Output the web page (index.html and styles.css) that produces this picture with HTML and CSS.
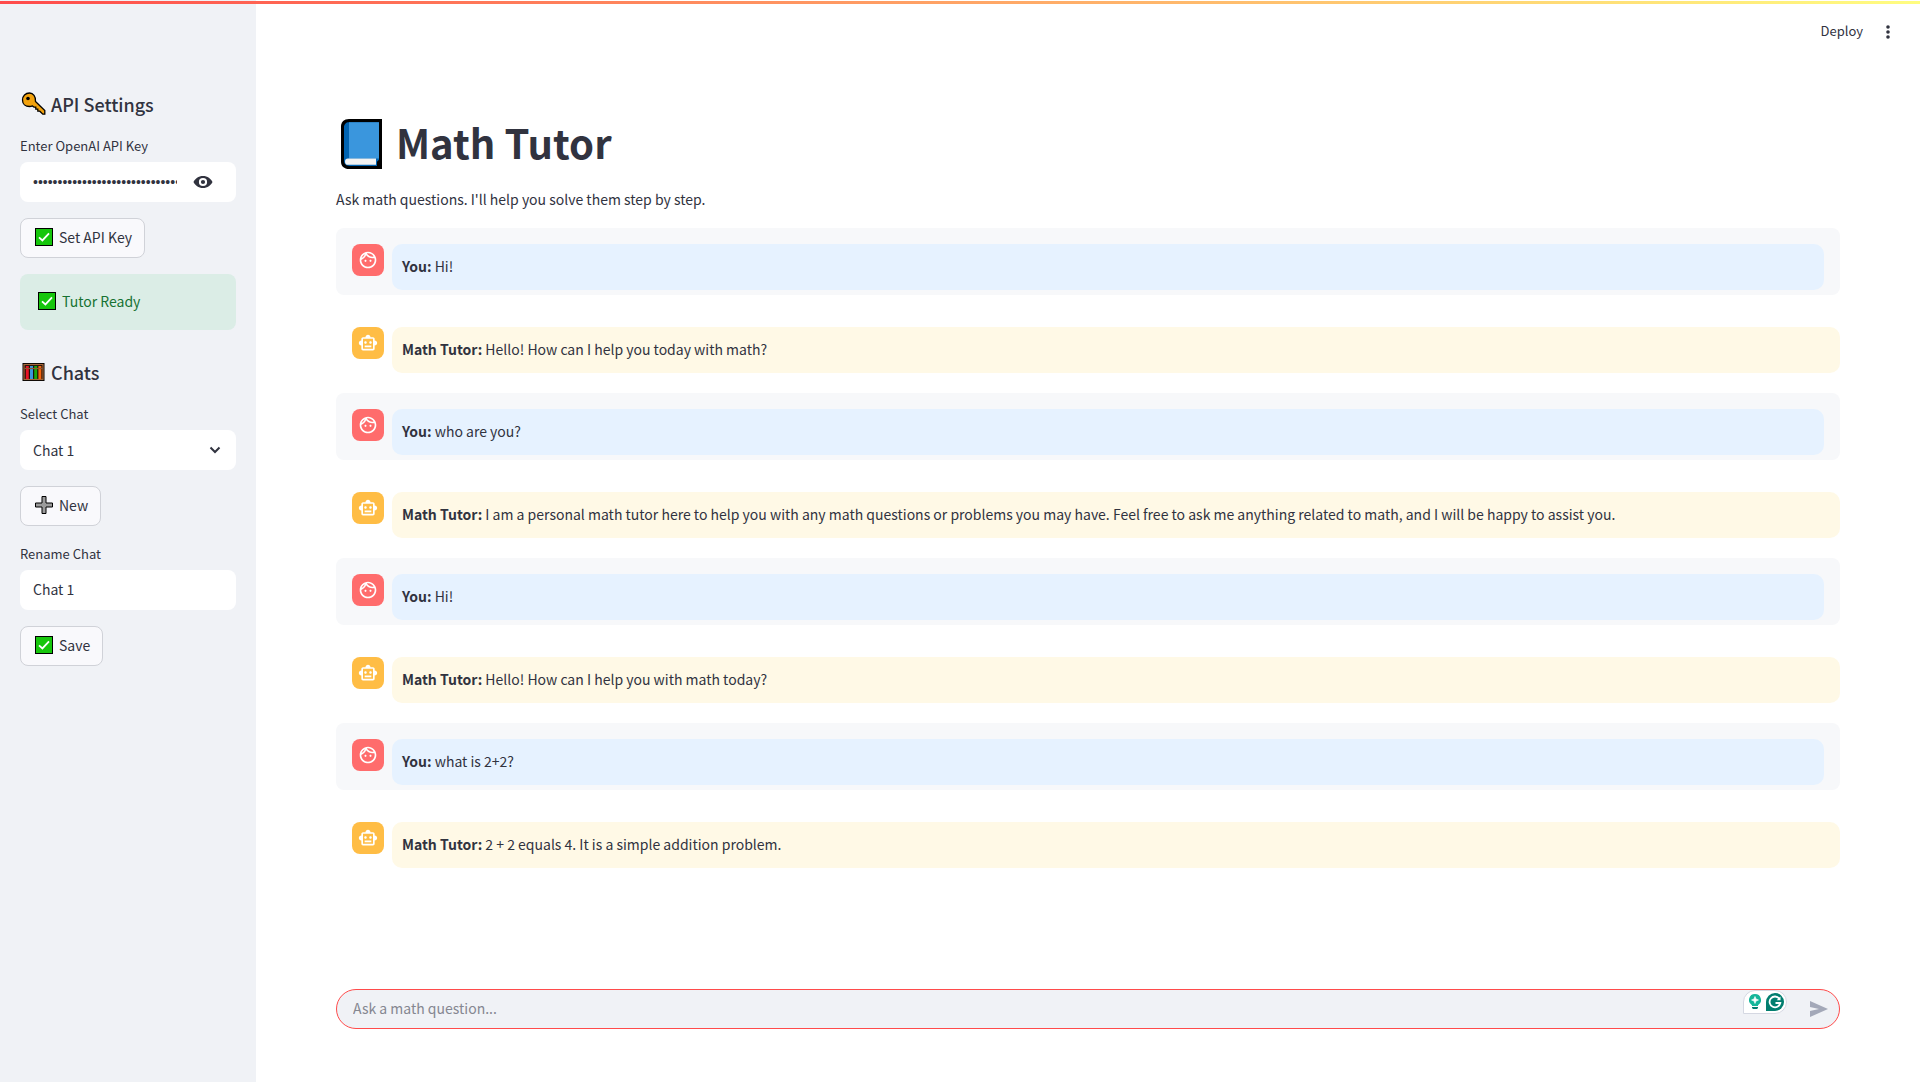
FILE: index.html
```html
<!DOCTYPE html>
<html lang="en">
<head>
<meta charset="utf-8">
<title>Math Tutor</title>
<meta name="viewport" content="width=device-width, initial-scale=1">
<link rel="stylesheet" href="styles.css">
</head>
<body>
<svg class="sprite" aria-hidden="true">
  <symbol id="check" viewBox="0 0 18 18"><rect x="0.5" y="0.5" width="17" height="17" fill="#16c60c" stroke="#000"/><path d="M4 9.400 7.400 12.400 14 5.400" fill="none" stroke="#fff" stroke-width="1.800"/></symbol>
  <symbol id="face" viewBox="0 0 24 24"><path d="M10.250 13c0 .69-.56 1.250-1.250 1.250S7.750 13.690 7.750 13s.56-1.250 1.250-1.250 1.250.56 1.250 1.250zM15 11.750c-.69 0-1.250.56-1.250 1.250s.56 1.250 1.250 1.250 1.250-.56 1.250-1.250-.56-1.250-1.250-1.250zm7 .25c0 5.520-4.480 10-10 10S2 17.520 2 12 6.480 2 12 2s10 4.480 10 10zM10.660 4.120C12.060 6.440 14.600 8 17.500 8c.46 0 .91-.05 1.340-.12C17.440 5.560 14.900 4 12 4c-.46 0-.91.05-1.340.12zM4.420 9.470c1.710-.97 3.030-2.550 3.660-4.440C6.370 6 5.050 7.580 4.420 9.470zM20 12c0-.78-.12-1.530-.33-2.240-.7.150-1.420.24-2.170.24-3.130 0-5.920-1.440-7.760-3.690C8.690 8.870 6.600 10.880 4 11.860c.01.04 0 .09 0 .14 0 4.410 3.590 8 8 8s8-3.590 8-8z" fill="#fff"/></symbol>
  <symbol id="robot" viewBox="0 0 24 24"><path d="M20 9V7c0-1.100-.9-2-2-2h-3c0-1.660-1.340-3-3-3S9 3.340 9 5H6c-1.100 0-2 .9-2 2v2c-1.660 0-3 1.340-3 3s1.340 3 3 3v4c0 1.100.9 2 2 2h12c1.100 0 2-.9 2-2v-4c1.660 0 3-1.340 3-3s-1.340-3-3-3zm-2 10H6V7h12v12zm-9-6c-.83 0-1.500-.67-1.500-1.500S8.170 10 9 10s1.500.67 1.500 1.500S9.830 13 9 13zm7.500-1.500c0 .83-.67 1.500-1.500 1.500s-1.500-.67-1.500-1.500.67-1.500 1.500-1.500 1.500.67 1.500 1.500zM8 15h8v2H8v-2z" fill="#fff"/></symbol>
</svg>
<div class="app">
  <aside class="sidebar">
    <h2 class="side-title">
      <svg class="side-emoji" viewBox="0 0 24 24" aria-hidden="true"><path d="M8 1C4 1 1 4 1 8s3 6.500 7 6.500c1 0 2-.2 3-.6l1.500 1.300h1.800v2h2v2h2l3 3h2v-3.700L14 9.500c.4-5-2.300-8.500-6-8.500z" fill="#f2a20d" stroke="#000" stroke-width="1.300"/><circle cx="6.500" cy="6.500" r="1.800"/></svg>
      <span>API Settings</span>
    </h2>
    <label class="field-label" for="api-key">Enter OpenAI API Key</label>
    <div class="field">
      <input class="field-input masked" id="api-key" type="password" value="sk-0000000000000000000000000000000000000000">
      <button class="reveal" type="button" aria-label="Show password text"><svg class="icon-20" viewBox="0 0 20 20" aria-hidden="true"><path fill-rule="evenodd" d="M10 4C5.500 4 2 6.700.5 10 2 13.300 5.500 16 10 16s8-2.700 9.500-6C18 6.700 14.500 4 10 4zm0 1.900a4.100 4.100 0 1 1 0 8.200 4.100 4.100 0 0 1 0-8.200zm0 2a2.100 2.100 0 1 0 0 4.200 2.100 2.100 0 0 0 0-4.200z" fill="#31333f"/></svg></button>
    </div>
    <button class="btn" type="button"><svg class="emoji" aria-hidden="true"><use href="#check"/></svg>Set API Key</button>
    <div class="alert" role="status"><svg class="emoji" aria-hidden="true"><use href="#check"/></svg>Tutor Ready</div>
    <h2 class="side-title">
      <svg class="side-emoji" viewBox="0 0 24 24" aria-hidden="true"><rect x="1" y="3" width="22" height="18"/><rect x="2.500" y="4.500" width="19" height="15" fill="#1c1008" stroke="#a5683a" stroke-width="1.200"/><path d="M5.800 6v13" stroke="#e81224" stroke-width="3"/><path d="M10 6v13" stroke="#3a96dd" stroke-width="3"/><path d="M14.200 6v13" stroke="#16a80c" stroke-width="3"/><path d="M18.400 6v13" stroke="#f7630c" stroke-width="3"/><path d="M3 8.500h18" stroke="#8e562e" stroke-width="1.200"/></svg>
      <span>Chats</span>
    </h2>
    <label class="field-label" for="chat">Select Chat</label>
    <div class="field">
      <select class="field-input" id="chat"><option>Chat 1</option></select>
      <svg class="chevron" viewBox="0 0 12 12" aria-hidden="true"><path d="M1.500 3.500 6 8l4.500-4.500" fill="none" stroke="#31333f" stroke-width="2"/></svg>
    </div>
    <button class="btn" type="button"><svg class="emoji" viewBox="0 0 18 18" aria-hidden="true"><path d="M7 .5h4V7h6.500v4H11v6.500H7V11H.5V7H7z" fill="#9b9b9b" stroke="#000"/></svg>New</button>
    <label class="field-label" for="rename">Rename Chat</label>
    <div class="field"><input class="field-input" id="rename" type="text" value="Chat 1"></div>
    <button class="btn" type="button"><svg class="emoji" aria-hidden="true"><use href="#check"/></svg>Save</button>
  </aside>
  <main class="main">
    <header class="toolbar">
      <button class="deploy" type="button">Deploy</button>
      <button class="more" type="button" aria-label="Main menu"><svg class="icon-20" viewBox="0 0 20 20" aria-hidden="true"><g fill="#31333f"><circle cx="10" cy="5" r="1.800"/><circle cx="10" cy="10" r="1.800"/><circle cx="10" cy="15" r="1.800"/></g></svg></button>
    </header>
    <h1 class="title">
      <svg class="book" viewBox="7 3 41 48" preserveAspectRatio="none" aria-hidden="true"><path d="M15 3h33v48H15c-5 0-8-3-8-7V10c0-4 3-7 8-7z" fill="#000"/><path d="M15 6h30v36l-2 2v4H16c-4 0-6-2-6-5V11c0-3 2-5 5-5z" fill="#0063b1"/><path d="M15 6h30v35H15z" fill="#3a96dd"/><path d="M14 41h28v6H14a3 3 0 0 1 0-6z" fill="#f2f2f2"/></svg>
      <span>Math Tutor</span>
    </h1>
    <p class="intro">Ask math questions. I'll help you solve them step by step.</p>
    <section class="messages">
      <article class="message user"><span class="avatar"><svg class="icon-20" aria-hidden="true"><use href="#face"/></svg></span><p class="bubble"><b>You:</b> Hi!</p></article>
      <article class="message"><span class="avatar"><svg class="icon-20" aria-hidden="true"><use href="#robot"/></svg></span><p class="bubble"><b>Math Tutor:</b> Hello! How can I help you today with math?</p></article>
      <article class="message user"><span class="avatar"><svg class="icon-20" aria-hidden="true"><use href="#face"/></svg></span><p class="bubble"><b>You:</b> who are you?</p></article>
      <article class="message"><span class="avatar"><svg class="icon-20" aria-hidden="true"><use href="#robot"/></svg></span><p class="bubble"><b>Math Tutor:</b> I am a personal math tutor here to help you with any math questions or problems you may have. Feel free to ask me anything related to math, and I will be happy to assist you.</p></article>
      <article class="message user"><span class="avatar"><svg class="icon-20" aria-hidden="true"><use href="#face"/></svg></span><p class="bubble"><b>You:</b> Hi!</p></article>
      <article class="message"><span class="avatar"><svg class="icon-20" aria-hidden="true"><use href="#robot"/></svg></span><p class="bubble"><b>Math Tutor:</b> Hello! How can I help you with math today?</p></article>
      <article class="message user"><span class="avatar"><svg class="icon-20" aria-hidden="true"><use href="#face"/></svg></span><p class="bubble"><b>You:</b> what is 2+2?</p></article>
      <article class="message"><span class="avatar"><svg class="icon-20" aria-hidden="true"><use href="#robot"/></svg></span><p class="bubble"><b>Math Tutor:</b> 2 + 2 equals 4. It is a simple addition problem.</p></article>
    </section>
    <form class="composer">
      <input class="question" type="text" placeholder="Ask a math question..." aria-label="Ask a math question">
      <span class="assist">
        <svg class="bulb" viewBox="0 0 12 16" aria-hidden="true"><path d="M6 0a6 6 0 0 0-3 11.200V12h6v-.8A6 6 0 0 0 6 0z" fill="#15b69a"/><path d="M6 2.500 7 5l2.500 1L7 7 6 9.500 5 7 2.500 6 5 5z" fill="#fff" stroke="#fff" stroke-width=".6"/><path d="M3 13h6v1l-1 1H4l-1-1z" fill="#027e6f"/></svg>
        <svg class="badge-g" viewBox="0 0 18 18" aria-hidden="true"><path d="M0 18V9a9 9 0 1 1 9 9z" fill="#027e6f"/><path d="M13.300 5.600A5.400 5.400 0 1 0 14.300 10H9.500" fill="none" stroke="#fff" stroke-width="1.800"/><path d="M14.500 3.500v3.800h-3.800z" fill="#fff"/></svg>
      </span>
      <button class="send" type="button" aria-label="Send message"><svg viewBox="0 0 18 16" width="18" height="16" aria-hidden="true"><path d="M0 0 18 8 0 16V10L9 8 0 6z" fill="#a3a8b8"/></svg></button>
    </form>
  </main>
</div>
</body>
</html>
```

FILE: styles.css
```css
* { box-sizing: border-box; }

body {
  margin: 0;
  color: #31333f;
  background: #fff;
  font: 14px/24px "Noto Sans CJK SC", "Noto Sans", sans-serif;
}

button, input, select { font: inherit; color: inherit; margin: 0; }
button { cursor: pointer; }
h1, h2, p { margin: 0; }
svg { display: block; flex: none; }
.sprite { position: absolute; width: 0; height: 0; }
.icon-20 { width: 20px; height: 20px; }

.app {
  position: relative;
  display: flex;
  min-height: 100vh;
}

/* status line across the top of the window */
.app::before {
  content: "";
  position: absolute;
  inset: 1px 0 auto;
  height: 3px;
  background: linear-gradient(90deg, #ff4b4b, #fffd80);
}

.sidebar {
  display: flex;
  flex-direction: column;
  align-items: flex-start;
  flex: none;
  width: 256px;
  padding: 92px 20px 24px;
  background: #f0f2f6;
}

.side-title {
  display: flex;
  align-items: center;
  gap: 5px;
  margin-bottom: 18px;
  padding-left: 1px;
  font-size: 18px;
  line-height: 24px;
  font-weight: 500;
}
.side-emoji { width: 25px; height: 24px; }

.field-label {
  margin-bottom: 4px;
  font-size: 13px;
}

.field {
  position: relative;
  display: flex;
  align-items: center;
  align-self: stretch;
  height: 40px;
  margin-bottom: 16px;
  padding: 0 13px;
  border-radius: 8px;
  background: #fff;
}
.field-input {
  flex: 1;
  min-width: 0;
  height: 24px;
  padding: 0 0 2px;
  border: 0;
  outline: 0;
  background: transparent;
  appearance: none;
}
.masked { padding: 0; font-family: "Liberation Sans", sans-serif; }
.reveal {
  margin: 0 10px 0 16px;
  padding: 0;
  border: 0;
  background: none;
}
.chevron { width: 12px; height: 12px; margin-right: 2px; }

.btn {
  display: flex;
  align-items: center;
  gap: 6px;
  height: 40px;
  margin-bottom: 16px;
  padding: 0 12px 2px 14px;
  border: 1px solid #d0d2d8;
  border-radius: 8px;
  background: #f9f9fc;
}
.emoji { width: 18px; height: 18px; }

.alert {
  display: flex;
  align-items: center;
  align-self: stretch;
  gap: 6px;
  height: 56px;
  margin-bottom: 30px;
  padding: 0 18px 2px;
  border-radius: 8px;
  color: #177233;
  background: #dbede6;
}

.main {
  display: flex;
  flex-direction: column;
  flex: 1;
  min-width: 0;
  padding: 0 80px 53px;
}

.toolbar {
  display: flex;
  align-items: center;
  justify-content: flex-end;
  gap: 15px;
  height: 64px;
  margin-right: -58px;
}
.deploy, .more { padding: 0; border: 0; background: none; font-size: 13px; }
.deploy { padding-bottom: 2px; }

.title {
  display: flex;
  align-items: flex-end;
  gap: 14px;
  margin-top: 51px;
  padding-left: 5px;
  font-size: 40px;
  line-height: 54px;
  font-weight: 700;
}
.book { width: 41px; height: 50px; }

.intro { margin: 18px 0 17px; }

.messages {
  display: flex;
  flex-direction: column;
  gap: 16px;
}
.message {
  display: flex;
  align-items: flex-start;
  gap: 8px;
  padding: 16px 0 4px 16px;
  border-radius: 8px;
}
.avatar {
  display: grid;
  place-items: center;
  flex: none;
  width: 32px;
  height: 32px;
  border-radius: 8px;
  background: #ffbd45;
}
.bubble {
  flex: 1;
  padding: 10px 10px 12px;
  border-radius: 10px;
  background: #fff9e6;
}
.bubble b { font-weight: 700; }
.user { padding: 16px 16px 5px; background: #f7f8fa; }
.user .avatar { background: #ff6c6c; }
.user .bubble { background: #e6f2ff; }

.composer {
  display: flex;
  align-items: center;
  height: 40px;
  margin-top: auto;
  padding: 0 11px 0 16px;
  border: 1px solid #ff4b4b;
  border-radius: 20px;
  background: #f0f2f6;
}
.question {
  flex: 1;
  min-width: 0;
  padding: 0 0 3px;
  border: 0;
  outline: 0;
  background: transparent;
}
.question::placeholder { color: #858791; }
.assist {
  display: flex;
  align-items: center;
  align-self: flex-start;
  gap: 5px;
  height: 24px;
  margin-right: 23px;
  padding: 0 2px 0 5px;
  border: 1px solid #d5d8e2;
  border-radius: 12px 12px 12px 0;
  background: #fff;
}
.bulb { width: 12px; height: 16px; }
.badge-g { width: 18px; height: 18px; }
.send { padding: 0; border: 0; background: none; }
```
